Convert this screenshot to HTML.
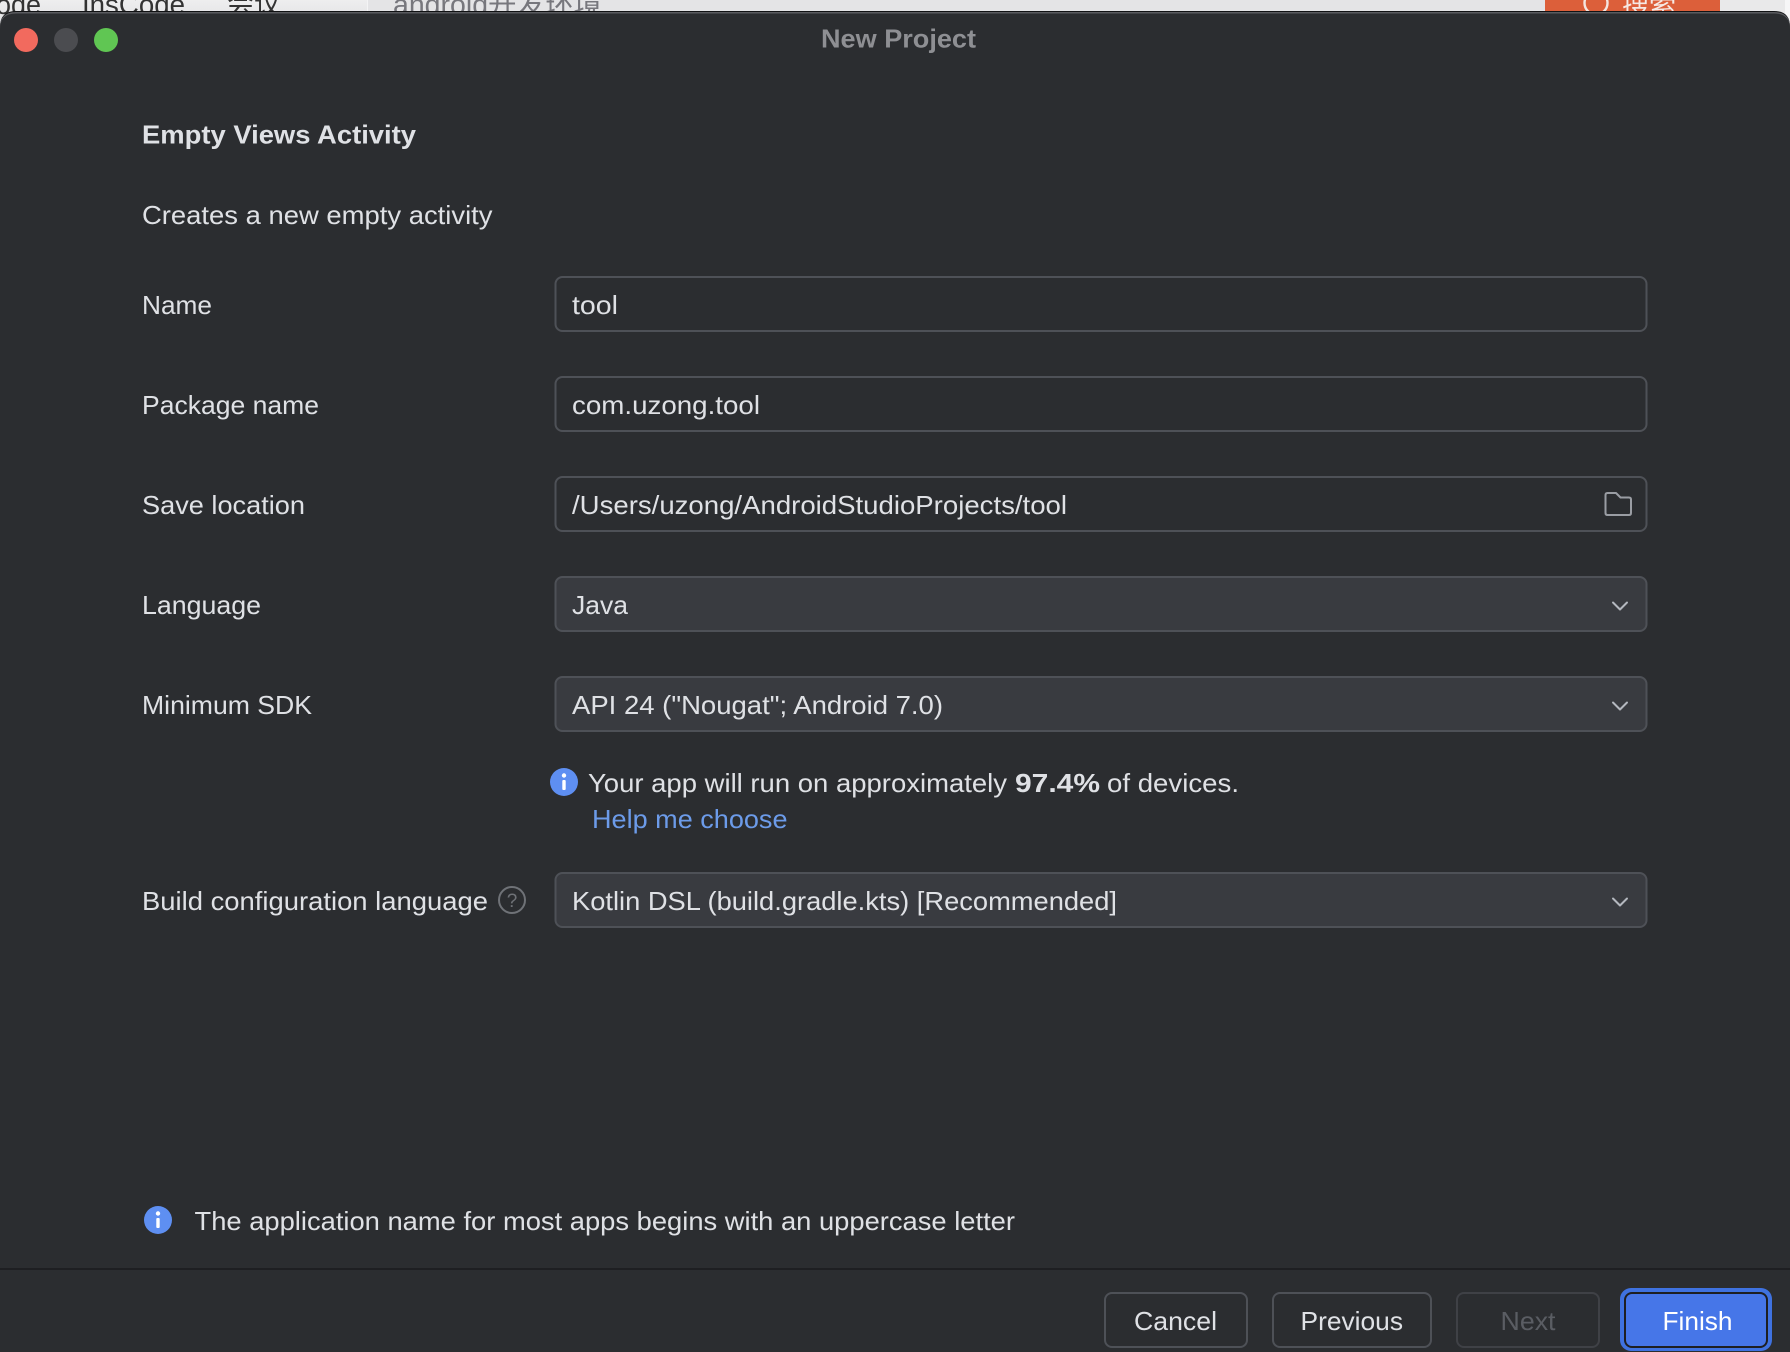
<!DOCTYPE html>
<html>
<head>
<meta charset="utf-8">
<style>
html,body{margin:0;padding:0;width:1790px;height:1352px;overflow:hidden;background:#e6e6e8}
svg{display:block}
text{font-family:"Liberation Sans","Noto Sans CJK SC",sans-serif;font-size:26px;fill:#dfe1e5}
.b{font-weight:700}
.top{fill:#333;font-size:28px}
.fld{fill:#2b2d30;stroke:#4e5157;stroke-width:2}
.dd{fill:#393b40;stroke:#4e5157;stroke-width:2}
.btn{fill:#2b2d30;stroke:#4e5157;stroke-width:2}
.chev{fill:none;stroke:#b4b8bf;stroke-width:2;stroke-linecap:round;stroke-linejoin:round}
</style>
</head>
<body>
<svg width="1790" height="1352" viewBox="0 0 1790 1352" xmlns="http://www.w3.org/2000/svg">
  <defs>
    <linearGradient id="tb" x1="0" y1="0" x2="0" y2="1">
      <stop offset="0" stop-color="#eeeeef"/>
      <stop offset="1" stop-color="#dedee0"/>
    </linearGradient>
  </defs>

  <!-- background page strip -->
  <rect x="0" y="0" width="1790" height="30" fill="url(#tb)"/>
  <rect x="1720" y="0" width="65" height="30" fill="#e9e9ea"/>
  <rect x="1785" y="0" width="5" height="30" fill="#f6f6f7"/>
  <rect x="367" y="0" width="1178" height="30" fill="#e4e4e6"/>
  <rect x="367" y="0" width="1" height="30" fill="#f4f4f5"/>
  <text class="top" x="-4" y="14" textLength="45" lengthAdjust="spacingAndGlyphs">ode</text>
  <text class="top" x="82" y="14" textLength="103" lengthAdjust="spacingAndGlyphs">InsCode</text>
  <text class="top" x="227" y="14" textLength="54" lengthAdjust="spacingAndGlyphs">会议</text>
  <text class="top" x="393" y="14" textLength="209" lengthAdjust="spacingAndGlyphs" style="fill:#77777d">android开发环境</text>
  <rect x="1545" y="0" width="175" height="30" fill="#dc5f3a"/>
  <circle cx="1596" cy="3" r="11.5" fill="none" stroke="#f4e6e0" stroke-width="2.4"/>
  <text x="1622" y="15" textLength="54" lengthAdjust="spacingAndGlyphs" style="fill:#f6e9e4;font-size:27px">搜索</text>

  <!-- window -->
  <path d="M0 27 Q0 11 16 11 H1774 Q1790 11 1790 27 V1352 H0 Z" fill="#111214"/>
  <path d="M0 28 Q0 12 16 12 H1774 Q1790 12 1790 28 V1352 H0 Z" fill="#5a5b5f"/>
  <path d="M0 29 Q0 13.500 16 13.500 H1774 Q1790 13.500 1790 29 V1352 H0 Z" fill="#2b2d30"/>

  <!-- traffic lights -->
  <circle cx="26" cy="40" r="12" fill="#f26a5e"/>
  <circle cx="66" cy="40" r="12" fill="#4b4c50"/>
  <circle cx="106" cy="40" r="12" fill="#60c653"/>
  <text class="b" x="821" y="47.500" textLength="155" lengthAdjust="spacingAndGlyphs" style="fill:#8e8f93">New Project</text>

  <text class="b" x="142" y="143.500" textLength="274" lengthAdjust="spacingAndGlyphs">Empty Views Activity</text>
  <text x="142" y="224" textLength="350.500" lengthAdjust="spacingAndGlyphs">Creates a new empty activity</text>

  <!-- labels -->
  <text x="142" y="314" textLength="70" lengthAdjust="spacingAndGlyphs">Name</text>
  <text x="142" y="414" textLength="177" lengthAdjust="spacingAndGlyphs">Package name</text>
  <text x="142" y="514" textLength="163" lengthAdjust="spacingAndGlyphs">Save location</text>
  <text x="142" y="614" textLength="119" lengthAdjust="spacingAndGlyphs">Language</text>
  <text x="142" y="714" textLength="170" lengthAdjust="spacingAndGlyphs">Minimum SDK</text>
  <text x="142" y="910" textLength="346" lengthAdjust="spacingAndGlyphs">Build configuration language</text>
  <circle cx="512" cy="900" r="13" fill="none" stroke="#6f7277" stroke-width="2"/>
  <text x="512" y="907" text-anchor="middle" style="font-size:19px;fill:#6f7277">?</text>

  <!-- fields -->
  <rect class="fld" x="555.500" y="277" width="1091" height="54" rx="7"/>
  <rect class="fld" x="555.500" y="377" width="1091" height="54" rx="7"/>
  <rect class="fld" x="555.500" y="477" width="1091" height="54" rx="7"/>
  <rect class="dd" x="555.500" y="577" width="1091" height="54" rx="7"/>
  <rect class="dd" x="555.500" y="677" width="1091" height="54" rx="7"/>
  <rect class="dd" x="555.500" y="873" width="1091" height="54" rx="7"/>

  <text x="572" y="314" textLength="46" lengthAdjust="spacingAndGlyphs">tool</text>
  <text x="572" y="414" textLength="188" lengthAdjust="spacingAndGlyphs">com.uzong.tool</text>
  <text x="572" y="514" textLength="495" lengthAdjust="spacingAndGlyphs">/Users/uzong/AndroidStudioProjects/tool</text>
  <text x="572" y="614" textLength="56" lengthAdjust="spacingAndGlyphs">Java</text>
  <text x="572" y="714" textLength="371" lengthAdjust="spacingAndGlyphs">API 24 ("Nougat"; Android 7.0)</text>
  <text x="572" y="910" textLength="545" lengthAdjust="spacingAndGlyphs">Kotlin DSL (build.gradle.kts) [Recommended]</text>

  <!-- folder icon -->
  <path d="M1605.500 513 V495 Q1605.500 493 1607.500 493 H1616 L1620.500 497.500 H1629 Q1631 497.500 1631 499.500 V513 Q1631 515 1629 515 H1607.500 Q1605.500 515 1605.500 513 Z" fill="none" stroke="#9a9da3" stroke-width="2" stroke-linejoin="round"/>

  <!-- chevrons -->
  <path class="chev" d="M1613 602.500 L1620 609.500 L1627 602.500"/>
  <path class="chev" d="M1613 702.500 L1620 709.500 L1627 702.500"/>
  <path class="chev" d="M1613 898.500 L1620 905.500 L1627 898.500"/>

  <!-- sdk info -->
  <circle cx="564" cy="782" r="14" fill="#5e8ff2"/>
  <circle cx="564" cy="775.500" r="2.200" fill="#fff"/>
  <rect x="562.300" y="780" width="3.400" height="10" rx="1" fill="#fff"/>
  <text x="588" y="792" textLength="419" lengthAdjust="spacingAndGlyphs">Your app will run on approximately</text>
  <text class="b" x="1015" y="792" textLength="85" lengthAdjust="spacingAndGlyphs">97.4%</text>
  <text x="1107" y="792" textLength="132" lengthAdjust="spacingAndGlyphs">of devices.</text>
  <text x="592" y="828" textLength="195.500" lengthAdjust="spacingAndGlyphs" style="fill:#6c9be9">Help me choose</text>

  <!-- bottom info -->
  <circle cx="158" cy="1220" r="14" fill="#5e8ff2"/>
  <circle cx="158" cy="1213.500" r="2.200" fill="#fff"/>
  <rect x="156.300" y="1218" width="3.400" height="10" rx="1" fill="#fff"/>
  <text x="194.500" y="1230" textLength="820.500" lengthAdjust="spacingAndGlyphs">The application name for most apps begins with an uppercase letter</text>

  <rect x="0" y="1268" width="1790" height="2" fill="#1e1f22"/>

  <!-- buttons -->
  <rect class="btn" x="1105" y="1293" width="142" height="54" rx="7"/>
  <text x="1134" y="1330" textLength="83" lengthAdjust="spacingAndGlyphs">Cancel</text>
  <rect class="btn" x="1273" y="1293" width="158" height="54" rx="7"/>
  <text x="1300.500" y="1330" textLength="102.500" lengthAdjust="spacingAndGlyphs">Previous</text>
  <rect x="1457" y="1293" width="142" height="54" rx="7" fill="#2b2d30" stroke="#3f4146" stroke-width="2"/>
  <text x="1500.500" y="1330" textLength="55" lengthAdjust="spacingAndGlyphs" style="fill:#5a5d63">Next</text>
  <rect x="1620" y="1288" width="152" height="63" rx="11" fill="#3f72e0"/>
  <rect x="1624" y="1292" width="144" height="56" rx="8" fill="#1e1f22"/>
  <rect x="1626" y="1294" width="140" height="52" rx="6" fill="#4676e8"/>
  <text x="1662.500" y="1330" textLength="70" lengthAdjust="spacingAndGlyphs" style="fill:#fff">Finish</text>
</svg>
</body>
</html>
